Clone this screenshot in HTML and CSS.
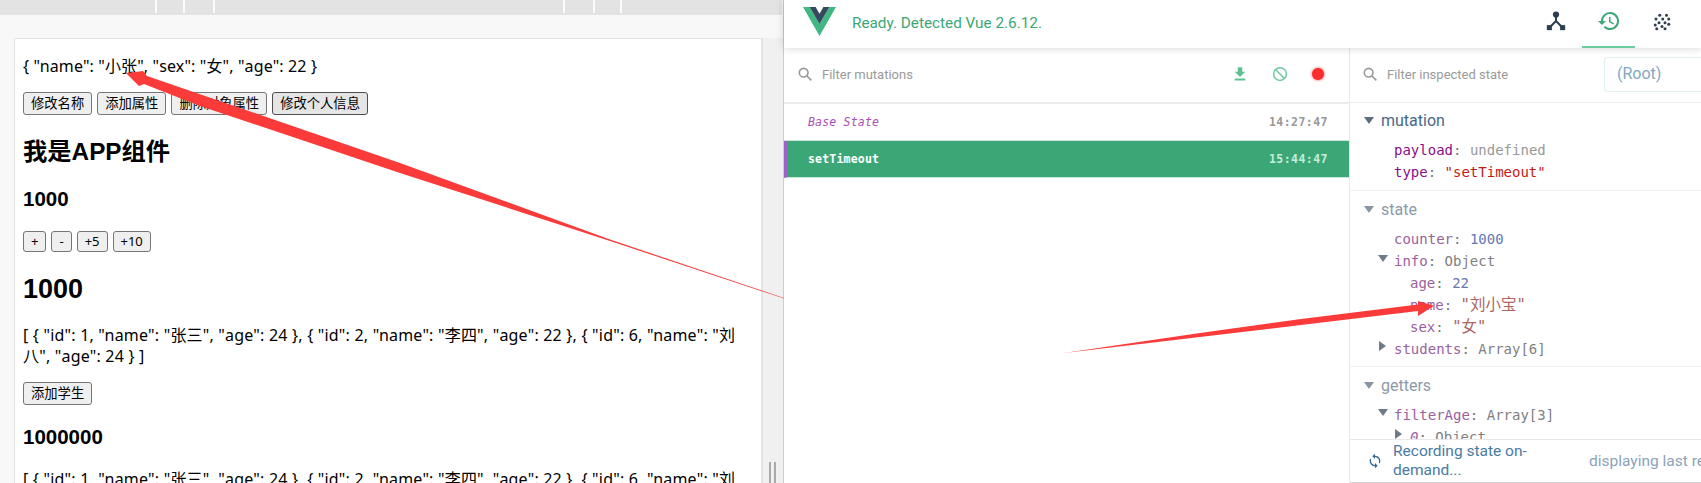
FILE: index.html
```html
<!DOCTYPE html>
<html lang="zh">
<head>
<meta charset="utf-8">
<title>Vue devtools</title>
<link rel="stylesheet" href="styles.css">
</head>
<body>
<div class="page">
  <section class="preview">
    <div class="tabs">
      <span class="tab t1"></span><span class="tab t2"></span><span class="tab t3"></span><span class="tab t4"></span><span class="tab t5"></span><span class="tab t6"></span>
    </div>
    <div class="stage">
      <div class="card">
        <p class="json first">{ "name": "小张", "sex": "女", "age": 22 }</p>
        <div class="btns"><button>修改名称</button><button>添加属性</button><button>删除对象属性</button><button class="focus">修改个人信息</button></div>
        <h2>我是APP组件</h2>
        <h3>1000</h3>
        <div class="btns small"><button>+</button><button>-</button><button>+5</button><button>+10</button></div>
        <h2 class="big">1000</h2>
        <p class="json">[ { "id": 1, "name": "张三", "age": 24 }, { "id": 2, "name": "李四", "age": 22 }, { "id": 6, "name": "刘八", "age": 24 } ]</p>
        <div class="btns add"><button>添加学生</button></div>
        <h3 class="million">1000000</h3>
        <p class="json">[ { "id": 1, "name": "张三", "age": 24 }, { "id": 2, "name": "李四", "age": 22 }, { "id": 6, "name": "刘八", "age": 24 } ]</p>
      </div>
    </div>
    <div class="splitter"><span class="grip"></span></div>
  </section>
  <section class="devtools">
    <header class="top">
      <svg class="logo" viewBox="0 0 33 29"><path fill="#41b883" d="M0 0h6.600L16.500 17 26.400 0H33L16.500 29z"/><path fill="#35495e" d="M6.600 0h6l3.900 6.800L20.400 0h6L16.500 17z"/></svg>
      <span class="ready">Ready. Detected Vue 2.6.12.</span>
      <nav class="nav">
        <span class="navitem"><svg viewBox="0 0 24 24" class="navicon"><circle cx="12" cy="5" r="3.400" fill="#2c3e50"/><path d="M12 7v6M12 12l-7 7M12 12l7 7" stroke="#2c3e50" stroke-width="2.200" fill="none"/><rect x="2" y="16.500" width="5.500" height="5.500" fill="#2c3e50"/><rect x="16.500" y="16.500" width="5.500" height="5.500" fill="#2c3e50"/></svg></span>
        <span class="navitem active"><svg viewBox="0 0 24 24" class="navicon hist"><path fill="#3ba776" d="M13 3a9 9 0 0 0-9 9H1l3.900 3.900L9 12H6a7 7 0 1 1 2.100 5l-1.400 1.400A9 9 0 1 0 13 3zm-1 5v5l4.300 2.500.7-1.200-3.500-2.100V8z"/></svg></span>
        <span class="navitem"><svg viewBox="0 0 24 24" class="navicon dots"><g fill="#2c3e50"><circle cx="9" cy="3" r="2"/><circle cx="18" cy="3" r="2"/><circle cx="4" cy="8" r="2"/><circle cx="13" cy="8" r="2"/><circle cx="21" cy="8" r="2"/><circle cx="8" cy="13" r="2"/><circle cx="16" cy="13" r="2"/><circle cx="3" cy="16" r="2"/><circle cx="21" cy="15" r="2"/><circle cx="12" cy="18" r="2"/><circle cx="5" cy="21" r="2"/><circle cx="16" cy="21" r="2"/></g></svg></span>
      </nav>
    </header>
    <div class="split">
      <div class="left">
        <div class="filter leftfilter">
          <svg class="search" viewBox="0 0 24 24"><path fill="none" stroke="#999" stroke-width="2.400" d="M10 3.500a6.500 6.500 0 1 0 0 13 6.500 6.500 0 0 0 0-13zM15 15l6.500 6.500"/></svg>
          <span class="ph">Filter mutations</span>
          <span class="actions">
            <svg class="act" viewBox="0 0 24 24"><path fill="#5cc294" d="M19 9h-4V3H9v6H5l7 7zM5 18v2.500h14V18z"/></svg>
            <svg class="act" viewBox="0 0 24 24"><circle cx="12" cy="12" r="8.500" fill="none" stroke="#6fc9a1" stroke-width="2"/><path d="M6 6l12 12" stroke="#6fc9a1" stroke-width="2"/></svg>
            <span class="rec"></span>
          </span>
        </div>
        <div class="row base"><span class="mname">Base State</span><span class="time">14:27:47</span></div>
        <div class="row sel"><span class="mname">setTimeout</span><span class="time">15:44:47</span></div>
      </div>
      <div class="right">
        <div class="filter rightfilter">
          <svg class="search" viewBox="0 0 24 24"><path fill="none" stroke="#999" stroke-width="2.400" d="M10 3.500a6.500 6.500 0 1 0 0 13 6.500 6.500 0 0 0 0-13zM15 15l6.500 6.500"/></svg>
          <span class="ph">Filter inspected state</span>
          <span class="root">(Root)</span>
        </div>
        <div class="state">
          <div class="group g1">
            <div class="ghead"><i class="tri"></i><span class="gname strong">mutation</span></div>
            <div class="kv l1"><b class="k strongk">payload</b>: <span class="undef">undefined</span></div>
            <div class="kv l1"><b class="k strongk">type</b>: <span class="strv">"setTimeout"</span></div>
          </div>
          <div class="group g2">
            <div class="ghead"><i class="tri"></i><span class="gname">state</span></div>
            <div class="kv l1"><b class="k">counter</b>: <span class="num">1000</span></div>
            <div class="kv l1"><i class="tri sm"></i><b class="k">info</b>: <span class="ty">Object</span></div>
            <div class="kv l2"><b class="k">age</b>: <span class="num">22</span></div>
            <div class="kv l2"><b class="k">name</b>: <span class="str2">"刘小宝"</span></div>
            <div class="kv l2"><b class="k">sex</b>: <span class="str2">"女"</span></div>
            <div class="kv l1"><i class="tri sm closed"></i><b class="k">students</b>: <span class="ty">Array[6]</span></div>
          </div>
          <div class="group g3">
            <div class="ghead"><i class="tri"></i><span class="gname">getters</span></div>
            <div class="kv l1"><i class="tri sm"></i><b class="k">filterAge</b>: <span class="ty">Array[3]</span></div>
            <div class="kv l2"><i class="tri sm closed"></i><b class="k it">0</b>: <span class="ty">Object</span></div>
          </div>
        </div>
        <footer class="foot">
          <svg class="sync" viewBox="0 0 24 24"><path fill="#35688f" d="M12 4V1L8 5l4 4V6a6 6 0 0 1 5.600 8.200l1.500 1.500A8 8 0 0 0 12 4zM12 18a6 6 0 0 1-5.600-8.200L4.900 8.300A8 8 0 0 0 12 20v3l4-4-4-4z"/></svg>
          <span class="rs">Recording state on-demand...</span>
          <span class="disp">displaying last received state</span>
        </footer>
      </div>
    </div>
  </section>
  <svg class="arrows" viewBox="0 0 1701 483" width="1701" height="483">
    <path fill="#fb3a3a" d="M126 73L143 71L147 76L400 163L610 239.500L784 298V298.600L610 241L400 173L200 106L144 84L139 86Z"/>
    <path fill="#fb3a3a" d="M1064 353L1200 333L1301 319L1418 304.500L1418 301L1434 305.700L1418 316L1418 311L1301 325L1200 337Z"/>
  </svg>
</div>
</body>
</html>
```
FILE: styles.css
```css
* { box-sizing: border-box; }
html, body { margin: 0; padding: 0; }
body { width: 1701px; height: 483px; overflow: hidden; background: #fff; font-family: "Liberation Sans", "Noto Sans CJK SC", sans-serif; }
.page { position: relative; display: flex; width: 1701px; height: 483px; overflow: hidden; }

.preview { width: 784px; flex: none; display: flex; flex-wrap: wrap; align-content: flex-start; background: #f8f8f8; border-right: 1px solid #ccc; }
.tabs { width: 782px; height: 15px; background: #e3e3e3; display: flex; }
.tab { height: 13px; border-right: 2px solid #fbfbfb; flex: none; }
.t1 { width: 157px; }
.t2 { width: 28px; }
.t3 { width: 30px; }
.t4 { width: 350px; }
.t5 { width: 30px; }
.t6 { width: 27px; }
.stage { width: 762px; height: 468px; padding: 23px 0 0 14px; overflow: hidden; }
.splitter { width: 21px; height: 445px; margin-top: 23px; background: #f0f0f0; border-left: 1px solid #e4e4e4; position: relative; }
.grip { position: absolute; left: 6px; bottom: 0; width: 7px; height: 21px; border-left: 2px solid #aaa; border-right: 2px solid #aaa; }
.card { width: 748px; height: 445px; background: #fff; border: 1px solid #e3e3e3; border-bottom: 0; padding: 0 8px; color: #000; font-family: "Noto Sans", "Noto Sans CJK SC", sans-serif; overflow: hidden; }
.json { margin: 0; font-size: 16px; line-height: 21px; letter-spacing: .2px; }
.json.first { margin-top: 17px; letter-spacing: .13px; }
.btns { display: flex; gap: 5px; margin-top: 15px; }
.btns button { height: 23px; font: 13.300px "Noto Sans", "Noto Sans CJK SC", sans-serif; line-height: 19px; padding: 0 7px; background: #efefef; border: 1px solid #767676; border-radius: 3px; color: #000; }
.btns button.focus { background: #e5e5e5; border-color: #4f4f4f; }
.btns.small { margin-top: 20px; gap: 5px; }
.btns.small button { height: 21px; font-size: 13px; padding: 0 7px; min-width: 20px; }
.btns.add { margin-top: 15px; }
h2 { font-size: 24.300px; line-height: 32px; margin: 21px 0 0; font-weight: 700; font-family: "Liberation Sans", "Noto Sans CJK SC", sans-serif; }
h2.big { font-size: 27px; line-height: 34px; margin-top: 20px; }
h3 { font-size: 20.500px; line-height: 24px; margin: 19px 0 0; font-weight: 700; font-family: "Liberation Sans", sans-serif; }
h2.big + .json { margin-top: 19px; }
h3.million { margin-top: 20px; }
h3.million + .json { margin-top: 20px; }

.devtools { flex: 1; min-width: 0; display: flex; flex-direction: column; font-family: Roboto, "Noto Sans CJK SC", sans-serif; }
.top { height: 48px; display: flex; align-items: center; padding: 0 0 0 19px; box-shadow: 0 0 8px rgba(0,0,0,.18); position: relative; z-index: 1; background: #fff; }
.logo { width: 33px; height: 29px; margin-top: -6px; }
.ready { margin-left: 16px; font-size: 15.300px; color: #3ba776; margin-top: -2px; }
.nav { margin-left: auto; display: flex; height: 48px; margin-right: 13px; }
.navitem { width: 53px; height: 48px; display: flex; justify-content: center; padding-top: 10px; }
.navitem.active { border-bottom: 2px solid #6ecb9f; }
.navicon { width: 22px; height: 22px; }
.navicon.hist { width: 24px; height: 24px; margin-top: -1px; }
.navicon.dots { width: 18px; height: 18px; margin-top: 3px; }
.split { flex: 1; display: flex; min-height: 0; }
.left { width: 566px; flex: none; border-right: 1px solid #e9e9e9; }
.filter { display: flex; align-items: center; height: 55px; padding-left: 13px; }
.leftfilter { height: 56px; border-bottom: 2px solid #ececec; padding-bottom: 2px; }
.search { width: 16px; height: 16px; flex: none; }
.ph { margin-left: 9px; font-size: 13px; color: #9a9a9a; }
.actions { margin-left: auto; display: flex; align-items: center; gap: 22px; margin-right: 24px; }
.act { width: 18px; height: 18px; }
.rec { width: 12px; height: 12px; border-radius: 50%; background: #fd2d2d; box-shadow: 0 0 3px #ff4040; margin: 0 1px; }
.row { height: 37px; display: flex; align-items: center; padding: 0 21px 0 24px; font: 11.500px "DejaVu Sans Mono", monospace; }
.row.base { border-bottom: 1px solid #c7e6d7; }
.mname { letter-spacing: .2px; }
.base .mname { font-style: italic; color: #a94fb8; }
.time { margin-left: auto; color: #999; letter-spacing: .45px; font-weight: 700; }
.row.sel { background: #3ba776; color: #fff; border-left: 4px solid #9c63c4; border-bottom: 1px solid #c7e6d7; padding-left: 20px; font-weight: 700; }
.sel .time { color: #c5ecd9; }

.right { flex: 1; min-width: 0; display: flex; flex-direction: column; overflow: hidden; }
.rightfilter { height: 55px; border-bottom: 1px solid #ececec; padding-left: 12px; padding-bottom: 2px; flex: none; position: relative; }
.root { position: absolute; left: 254px; top: 9px; width: 120px; height: 35px; border: 1px solid #dff2ea; border-right: 0; border-radius: 4px 0 0 4px; padding: 6px 0 0 12px; font-size: 16px; color: #7fa8c4; }
.state { flex: 1; min-height: 0; overflow: hidden; font: 14px "DejaVu Sans Mono", "Noto Sans CJK SC", monospace; color: #555; }
.group { padding-left: 14px; padding-top: 4px; border-bottom: 1px solid #efefef; }
.g1 { height: 88px; padding-top: 2px; }
.g2 { height: 176px; }
.g3 { border: 0; }
.ghead { height: 29px; margin-bottom: 4px; display: flex; align-items: center; font: 16px Roboto, sans-serif; }
.gname { color: #8c9aa8; margin-left: 7px; }
.gname.strong { color: #486887; }
.g1 .ghead { height: 30px; }
.tri { display: inline-block; width: 0; height: 0; border-left: 5px solid transparent; border-right: 5px solid transparent; border-top: 7px solid #8a96a3; }
.g1 .ghead .tri { border-top-color: #5e6d7c; }
.tri.sm { position: absolute; margin-left: -16px; margin-top: 5px; border-top-color: #6e7b88; }
.tri.sm.closed { border: 0; border-left: 7px solid #6e7b88; border-top: 5px solid transparent; border-bottom: 5px solid transparent; margin-left: -15px; margin-top: 3px; }
.kv { height: 22px; line-height: 22px; white-space: nowrap; position: relative; color: #777; }
.l1 { padding-left: 30px; }
.l2 { padding-left: 46px; }
.k { font-weight: 400; color: #99619e; }
.k.strongk { color: #8a0f8a; }
.k.it { font-style: italic; }
.undef { color: #999; }
.strv { color: #c41a16; }
.str2 { color: #ad6462; font-size: 15.500px; }
.num { color: #6479b0; }
.ty { color: #808080; }
.foot { height: 44px; flex: none; display: flex; align-items: center; background: #fff; border-top: 1px solid #e8e8e8; border-bottom: 1px solid #d4d4d4; font-size: 15.500px; line-height: 19px; position: relative; }
.sync { width: 16px; height: 16px; margin-left: 17px; flex: none; }
.rs { width: 150px; margin-left: 10px; color: #4a7ba5; flex: none; }
.disp { width: 205px; margin-left: 46px; color: #8ca3bb; flex: none; }
.arrows { position: absolute; left: 0; top: 0; pointer-events: none; }
```
